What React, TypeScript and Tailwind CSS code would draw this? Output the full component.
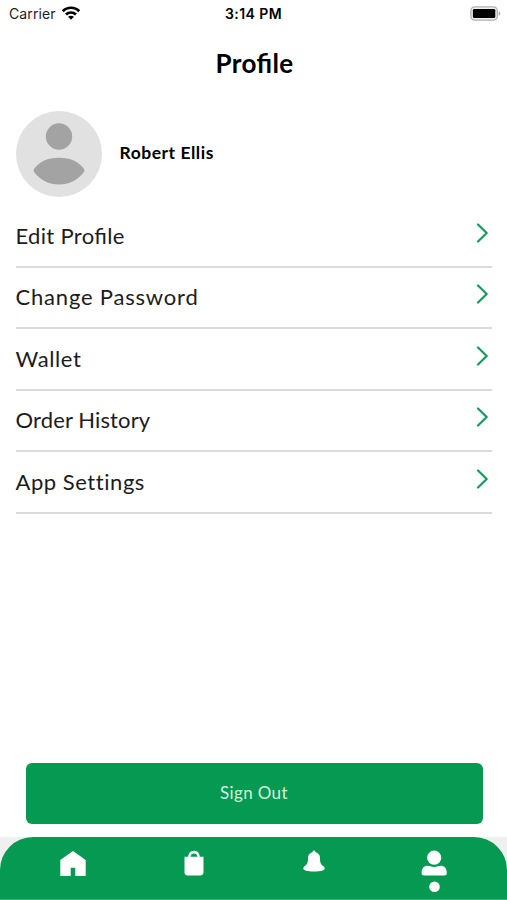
const items = [
  { label: 'Edit Profile', tracking: "tracking-[0.32px] [font-feature-settings:'liga'_1]" },
  { label: 'Change Password', tracking: 'tracking-[0.8px]' },
  { label: 'Wallet', tracking: 'tracking-[0.6px]' },
  { label: 'Order History', tracking: 'tracking-[0.12px]' },
  { label: 'App Settings', tracking: 'tracking-[0.55px]' },
];

function StatusBar() {
  return (
    <header className="grid h-[26px] shrink-0 grid-cols-3 items-center font-['Inter',sans-serif] text-[14px] text-[#222]">
      <div className="flex items-center gap-[6px] pl-[9px]">
        <span className="tracking-[0.1px]">Carrier</span>
        <svg width="18" height="14" viewBox="0 0 18 14" fill="none" stroke="#000" strokeWidth="2.7">
          <path d="M.8 5.200C5.200.600 12.800.600 17.200 5.200" />
          <path d="M4 8.500c2.700-2.700 7.300-2.700 10 0" />
          <path d="M6.100 10.800c1.600-1.500 4.200-1.500 5.800 0L9 13.700z" fill="#000" stroke="none" />
        </svg>
      </div>
      <span className="text-center text-[14px] font-semibold tracking-[0.45px] text-black">3:14 PM</span>
      <svg className="mr-[6px] justify-self-end" width="31" height="15" viewBox="0 0 31 15">
        <rect x=".9" y=".9" width="26.400" height="13.200" rx="3.800" fill="#eee" stroke="#b0b0b0" strokeWidth="1.300" />
        <rect x="2.900" y="2.900" width="22.400" height="9.200" rx="1.400" fill="#000" />
        <path d="M28.700 5.200c2.100.7 2.100 3.900 0 4.600z" fill="#aaa" />
      </svg>
    </header>
  );
}

function Avatar() {
  return (
    <svg width="86" height="86" viewBox="0 0 86 86">
      <circle cx="43" cy="43" r="43" fill="#e1e1e1" />
      <circle cx="43" cy="25.500" r="13.200" fill="#a3a3a3" />
      <path d="M18 58C23 50.600 32 46.700 43 46.700S63 50.600 68 58q.8 1.500 0 3C62 69 53 73.500 43 73.500S24 69 18 61q-.8-1.500 0-3z" fill="#a3a3a3" />
    </svg>
  );
}

export default function App() {
  return (
    <div className="flex h-[900px] w-full flex-col bg-white font-['Lato',sans-serif] text-[#1c1c1c]">
      <StatusBar />
      <h1 className="mt-[19px] pl-[2px] text-center text-[26px] leading-9 font-bold tracking-[0.35px] text-black [font-feature-settings:'liga'_1]">Profile</h1>
      <section className="mt-[29.500px] flex items-center gap-[18px] pl-[15.500px]">
        <Avatar />
        <span className="text-[17.500px] font-bold tracking-[0.52px] text-black">Robert Ellis</span>
      </section>
      <ul className="mr-[15px] ml-[15.500px] mt-[9.500px]">
        {items.map((item) => (
          <li key={item.label} className="flex h-[61.500px] items-center justify-between border-b-2 border-[#dadada]">
            <span className={`text-[22px] leading-[30px] ${item.tracking}`}>{item.label}</span>
            <svg className="mr-[3px] mb-[6px]" width="14" height="20" viewBox="0 0 14 20" fill="none" stroke="#159b5c" strokeWidth="2.2" strokeLinecap="round" strokeLinejoin="round">
              <path d="m3 1.500 8.700 8.500L3 18.500" />
            </svg>
          </li>
        ))}
      </ul>
      <button className="mr-[24.500px] ml-[25.500px] mt-auto h-[61px] shrink-0 rounded-md bg-[#059952] text-[17px] tracking-[0.35px] text-[#d0f2df]">Sign Out</button>
      <div className="mt-[13.500px] shrink-0 bg-[#f0f0f0]">
        <nav className="grid h-[63px] grid-cols-[146px_95px_146px_95px] rounded-t-[33px] border-b border-[#37ad75] bg-[#059952] text-white">
          <svg className="mt-[14px] ml-[60px]" width="26" height="25" viewBox="0 0 26 25" fill="currentColor">
            <path d="M13 0 25.700 9v16H15.300v-8.300h-4.600V25H.300V9z" />
          </svg>
          <svg className="mt-[13px] ml-[38px]" width="20" height="26" viewBox="0 0 20 26" fill="currentColor">
            <path d="M4.200 7C4.200 3.600 6.500.7 10 .7S15.800 3.600 15.800 7h-2.300c0-2-1.300-3.600-3.500-3.600S6.500 5 6.500 7z" />
            <path d="M.500 6.700h19v15.600c0 2-1.200 3.200-3.200 3.200H3.700c-2 0-3.200-1.200-3.200-3.200z" />
          </svg>
          <svg className="mt-[13px] ml-[62px]" width="22" height="22" viewBox="0 0 22 22" fill="currentColor">
            <path d="M11 .5c.8 0 1.300.7 1.500 1.700 2.900.8 4.500 2.800 4.500 5.800 0 4.500.5 6.200 3.500 8.300.8.600 1.200 1.300 1.200 2.200 0 2-4 3-10.700 3S.300 20.500.300 18.500c0-.9.400-1.600 1.200-2.200C4.500 14.200 5 12.500 5 8c0-3 1.600-5 4.500-5.800C9.700 1.200 10.200.5 11 .5z" />
          </svg>
          <svg className="mt-[13px] ml-[34px]" width="26" height="43" viewBox="0 0 26 43" fill="currentColor">
            <circle cx="13.200" cy="7.700" r="7.100" />
            <path d="M.600 23c0-5 2.400-7.200 6.200-7.200 1.800 0 3.400 1.200 6.400 1.200s4.600-1.200 6.400-1.200c3.800 0 6.200 2.200 6.200 7.200 0 1.700-.9 2.500-2.500 2.500H3.100C1.500 25.500.600 24.700.600 23z" />
            <circle cx="13.500" cy="36.700" r="5.300" />
          </svg>
        </nav>
      </div>
    </div>
  );
}
